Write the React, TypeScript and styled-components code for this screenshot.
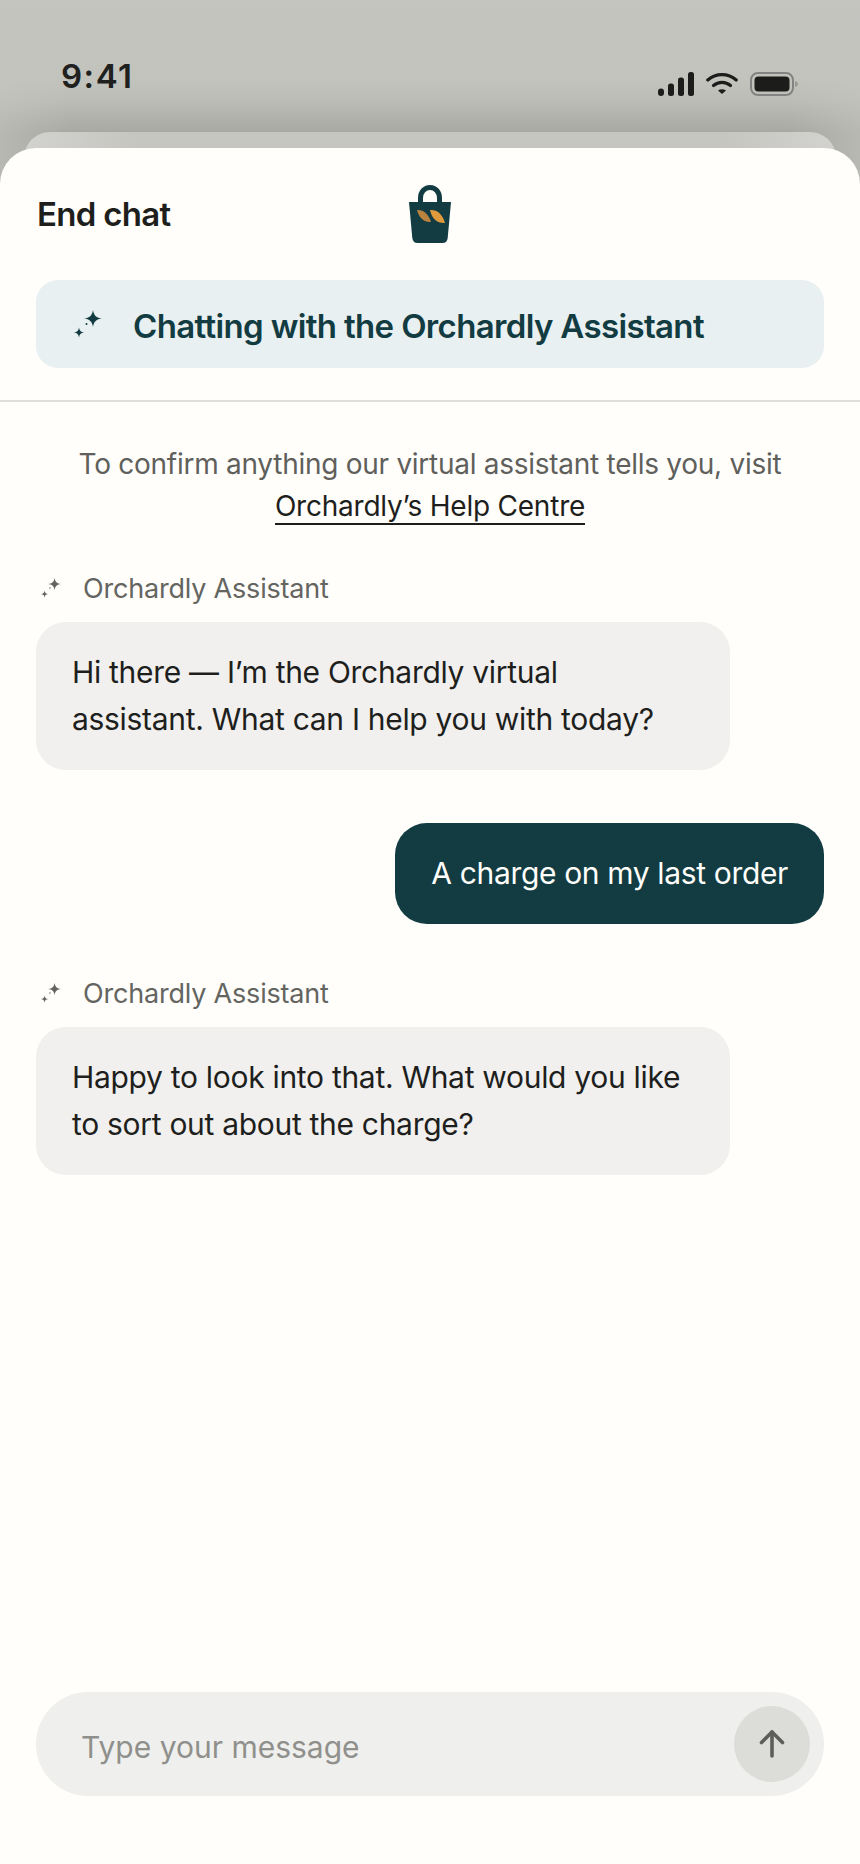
import React from "react";
import styled, { createGlobalStyle } from "styled-components";

const Global = createGlobalStyle`
  html, body { margin: 0; padding: 0; background: #fffefb; }
  body { font-family: Inter, "Liberation Sans", sans-serif; -webkit-font-smoothing: antialiased; }
  * { box-sizing: border-box; }
`;

const Screen = styled.div`
  width: 860px;
  height: 1864px;
  display: flex;
  flex-direction: column;
  overflow: hidden;
  background:
    linear-gradient(90deg, rgba(196, 197, 192, 0.55) 0, rgba(196, 197, 192, 0) 70px, rgba(196, 197, 192, 0) 790px, rgba(196, 197, 192, 0.55) 100%),
    linear-gradient(180deg, #c4c5bf 0px, #c2c3bc 80px, #bcbdb7 100px, #a8a9a3 132px, #a8a9a3 200px);
`;

const StatusBar = styled.div`
  height: 132px;
  flex: none;
  display: flex;
  justify-content: space-between;
  align-items: flex-start;
  padding: 56px 62px 0 61px;
`;

const Clock = styled.div`
  font-size: 33px;
  line-height: 40px;
  font-weight: 600;
  letter-spacing: 1.5px;
  color: #20211f;
`;

const StatusIcons = styled.div`
  display: flex;
  align-items: flex-start;
  gap: 12px;
  margin-top: 16px;
`;

const BackCard = styled.div`
  flex: none;
  height: 40px;
  margin: 0 24px -24px;
  border-radius: 26px 26px 0 0;
  background: linear-gradient(90deg, #d2d2cf 0%, #c5c6c0 14%, #c5c6c0 86%, #d2d2cf 100%);
`;

const Sheet = styled.div`
  position: relative;
  flex: 1;
  display: flex;
  flex-direction: column;
  background: #fffefb;
  border-radius: 36px 36px 0 0;
`;

const Header = styled.header`
  display: flex;
  align-items: center;
  justify-content: center;
  position: relative;
  height: 132px;
`;

const EndChat = styled.button`
  position: absolute;
  left: 37px;
  top: 46px;
  padding: 0;
  border: 0;
  background: none;
  font: 600 33px/40px Inter, sans-serif;
  letter-spacing: -0.7px;
  color: #1e1f1d;
`;

const Banner = styled.div`
  display: flex;
  align-items: center;
  height: 88px;
  margin: 0 36px;
  padding-left: 38px;
  gap: 31px;
  border-radius: 22px;
  background: #e9f0f1;
`;

const BannerTitle = styled.div`
  padding-top: 4px;
  font-size: 33px;
  line-height: 40px;
  font-weight: 600;
  letter-spacing: -0.65px;
  color: #123c42;
`;

const Divider = styled.hr`
  margin: 32px 0 0;
  border: 0;
  height: 2px;
  background: #dfdfdc;
`;

const Thread = styled.main`
  flex: 1;
  display: flex;
  flex-direction: column;
  padding: 41px 36px 0;
`;

const Notice = styled.p`
  margin: 0 0 45px;
  text-align: center;
  font-size: 28px;
  line-height: 42px;
  letter-spacing: -0.27px;
  color: #5f605c;
`;

const HelpLink = styled.a`
  color: #1e1f1d;
  letter-spacing: -0.22px;
  text-decoration: none;
  border-bottom: 2px solid #1e1f1d;
`;

const Sender = styled.div`
  display: flex;
  align-items: center;
  gap: 22px;
  height: 32px;
  margin-bottom: 18px;
  padding-left: 5px;
  font-size: 27px;
  letter-spacing: -0.2px;
  color: #646561;
`;

const BotBubble = styled.div`
  width: 694px;
  padding: 27px 36px 27px;
  border-radius: 30px;
  background: #f1f0ee;
  font-size: 30px;
  line-height: 47px;
  letter-spacing: -0.3px;
  color: #1e1f1d;
  margin-bottom: 53px;
`;

const UserBubble = styled.div`
  align-self: flex-end;
  padding: 27px 36px;
  border-radius: 32px;
  background: #123c42;
  font-size: 30px;
  line-height: 47px;
  letter-spacing: -0.35px;
  color: #fffefb;
  margin-bottom: 53px;
`;

const Composer = styled.div`
  display: flex;
  align-items: center;
  justify-content: space-between;
  height: 104px;
  margin: 0 36px 68px;
  padding: 0 14px 0 45px;
  border-radius: 52px;
  background: #efefed;
`;

const Placeholder = styled.div`
  padding-top: 6px;
  font-size: 30px;
  color: #8f908c;
`;

const Send = styled.button`
  display: flex;
  align-items: center;
  justify-content: center;
  width: 76px;
  height: 76px;
  padding: 0;
  border: 0;
  border-radius: 50%;
  background: #dcdcd9;
`;

const Sparkle = ({ size, color }: { size: number; color: string }) => (
  <svg width={size} height={size} viewBox="0 0 28 28" fill={color}>
    <path d="M19 0C19.800 5.500 22.500 8 28 8.500 22.500 9 19.800 11.500 19 17 18.200 11.500 15.500 9 10 8.500 15.500 8 18.200 5.500 19 0z" />
    <path d="M5 17.500c.4 3 1.700 4.600 5 5-3.300.4-4.600 2-5 5-.4-3-1.700-4.600-5-5 3.300-.4 4.600-2 5-5z" />
    <circle cx="12.500" cy="14" r="1" />
  </svg>
);

const Bag = () => (
  <svg width="42" height="60" viewBox="0 0 42 60">
    <path d="M11.500 22v-8c0-6 4-10.500 9.500-10.500S30.500 8 30.500 14v8" fill="none" stroke="#123c42" strokeWidth="5" />
    <path d="M0 18h42l-3.300 36c-.3 3-2.200 5-5.200 5H8.500c-3 0-4.900-2-5.200-5z" fill="#123c42" />
    <path d="M8 26c6.500-.5 11.500 4 14 12C15 38.500 10 34 8 26z" fill="#b9833f" />
    <path d="M21 26c7-.5 12.500 4 15 13-7.500.5-13-4-15-13z" fill="#e09a3e" />
  </svg>
);

const Signal = () => (
  <svg width="36" height="24" viewBox="0 0 36 24" fill="#1c1d1b">
    <rect x="0" y="16.500" width="6" height="7.500" rx="3" />
    <rect x="10" y="11.500" width="6" height="12.500" rx="2.500" />
    <rect x="20" y="5.500" width="6" height="18.500" rx="2.500" />
    <rect x="30" y="0" width="6" height="24" rx="2.500" />
  </svg>
);

const Wifi = () => (
  <svg width="32" height="22" viewBox="0 0 32 22" fill="none" stroke="#1c1d1b" strokeWidth="3.200" strokeLinecap="round">
    <path d="M1.800 8C10 .8 22 .8 30.200 8" />
    <path d="M7.500 13.500c5-4.300 12-4.300 17 0" />
    <path d="M12 18.500l4 3.500 4-3.500c-2.500-1.600-5.500-1.600-8 0z" fill="#1c1d1b" stroke="none" />
  </svg>
);

const Battery = () => (
  <svg width="48" height="24" viewBox="0 0 48 24">
    <rect x="1" y="1" width="42" height="22" rx="7" fill="none" stroke="#838481" strokeWidth="2" />
    <rect x="4.500" y="4.500" width="35" height="15" rx="4" fill="#1c1d1b" />
    <path d="M45 9c2 .6 3 1.600 3 3s-1 2.400-3 3z" fill="#999a96" />
  </svg>
);

const ArrowUp = () => (
  <svg width="26" height="30" viewBox="0 0 26 30" fill="none" stroke="#5d5e5a" strokeWidth="3.600" strokeLinecap="round" strokeLinejoin="round">
    <path d="M13 27V3" />
    <path d="M2.500 13.500L13 3l10.500 10.500" />
  </svg>
);

export default function App() {
  return (
    <Screen>
      <Global />
      <StatusBar>
        <Clock>9:41</Clock>
        <StatusIcons>
          <Signal />
          <Wifi />
          <Battery />
        </StatusIcons>
      </StatusBar>
      <BackCard />
      <Sheet>
        <Header>
          <EndChat>End chat</EndChat>
          <Bag />
        </Header>
        <Banner>
          <Sparkle size={28} color="#123c42" />
          <BannerTitle>Chatting with the Orchardly Assistant</BannerTitle>
        </Banner>
        <Divider />
        <Thread>
          <Notice>
            To confirm anything our virtual assistant tells you, visit
            <br />
            <HelpLink>Orchardly’s Help Centre</HelpLink>
          </Notice>
          <Sender>
            <Sparkle size={20} color="#646561" />
            Orchardly Assistant
          </Sender>
          <BotBubble>
            Hi there — I’m the Orchardly virtual
            <br />
            assistant. What can I help you with today?
          </BotBubble>
          <UserBubble>A charge on my last order</UserBubble>
          <Sender>
            <Sparkle size={20} color="#646561" />
            Orchardly Assistant
          </Sender>
          <BotBubble>
            Happy to look into that. What would you like
            <br />
            to sort out about the charge?
          </BotBubble>
        </Thread>
        <Composer>
          <Placeholder>Type your message</Placeholder>
          <Send>
            <ArrowUp />
          </Send>
        </Composer>
      </Sheet>
    </Screen>
  );
}
